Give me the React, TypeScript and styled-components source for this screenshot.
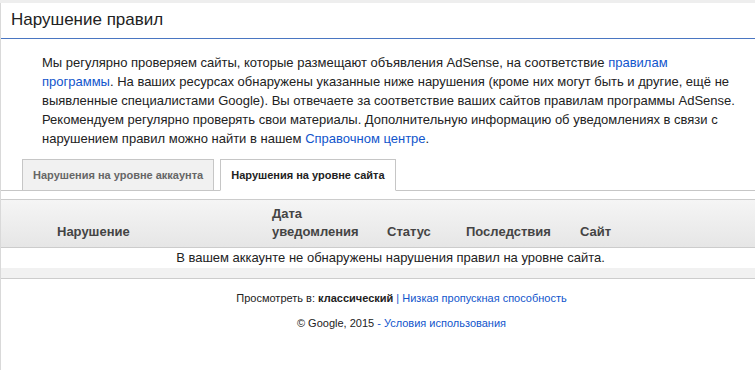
import React from "react";
import styled, { createGlobalStyle } from "styled-components";

const GlobalStyle = createGlobalStyle`
  html, body {
    margin: 0;
    padding: 0;
    background: #eeeeee;
    overflow: hidden;
  }
  body {
    font-family: "Liberation Sans", Arial, sans-serif;
    color: #222;
  }
`;

const Page = styled.div`
  padding-top: 3px;
  width: 802px;
`;

const Panel = styled.div`
  background: #fff;
  border-left: 1px solid #d9d9d9;
  min-height: 367px;
`;

const Title = styled.h1`
  margin: 0;
  padding: 5px 10px 0;
  height: 30px;
  font-size: 17px;
  font-weight: normal;
  line-height: 24px;
  color: #222;
  border-bottom: 1px solid #4a76c2;
`;

const Intro = styled.p`
  margin: 14px 0 0 41px;
  width: 698px;
  font-size: 13px;
  line-height: 19px;
  color: #222;
`;

const A = styled.a`
  color: #1155cc;
  text-decoration: none;
`;

const Tabs = styled.div`
  display: flex;
  gap: 6px;
  margin-top: 11px;
  padding-left: 21px;
  border-bottom: 1px solid #c6c6c6;
  height: 31px;
`;

const Tab = styled.div<{ $active?: boolean }>`
  box-sizing: border-box;
  height: 32px;
  padding: 0 10px;
  display: flex;
  align-items: center;
  font-size: 11px;
  font-weight: bold;
  color: ${(p) => (p.$active ? "#222" : "#666")};
  background: ${(p) => (p.$active ? "#fff" : "#f1f1f1")};
  border: 1px solid #c6c6c6;
  border-bottom-color: ${(p) => (p.$active ? "#fff" : "#c6c6c6")};
`;

const Table = styled.div`
  margin-top: 8px;
  border-bottom: 1px solid #cccccc;
`;

const HeadRow = styled.div`
  display: grid;
  grid-template-columns: 271px 115px 79px 114px 1fr;
  align-items: end;
  height: 49px;
  box-sizing: border-box;
  padding-bottom: 6px;
  border-top: 1px solid #cccccc;
  border-bottom: 1px solid #cccccc;
  background: linear-gradient(#f5f5f5, #e6e6e6);
`;

const HeadCell = styled.div<{ $pad?: number }>`
  padding-left: ${(p) => p.$pad ?? 0}px;
  font-size: 13px;
  font-weight: bold;
  line-height: 18px;
  color: #444;
`;

const EmptyRow = styled.div`
  height: 20px;
  line-height: 20px;
  text-align: center;
  padding-right: 22px;
  font-size: 13px;
  color: #222;
`;

const Strip = styled.div`
  height: 10px;
  background: #f1f1f1;
`;

const Footer = styled.div`
  text-align: center;
  font-size: 11px;
  color: #222;
  padding-top: 12px;
`;

const FooterLine = styled.div`
  line-height: 14px;
  & + & {
    margin-top: 11px;
  }
`;

const Sep = styled.span`
  color: #1155cc;
`;

export default function App() {
  return (
    <Page>
      <GlobalStyle />
      <Panel>
        <Title>Нарушение правил</Title>
        <Intro>
          Мы регулярно проверяем сайты, которые размещают объявления AdSense, на соответствие{" "}
          <A href="#">правилам программы</A>. На ваших ресурсах обнаружены указанные ниже нарушения (кроме
          них могут быть и другие, ещё не выявленные специалистами Google). Вы отвечаете за соответствие ваших
          сайтов правилам программы AdSense. Рекомендуем регулярно проверять свои материалы. Дополнительную
          информацию об уведомлениях в связи с нарушением правил можно найти в нашем{" "}
          <A href="#">Справочном центре</A>.
        </Intro>
        <Tabs>
          <Tab>Нарушения на уровне аккаунта</Tab>
          <Tab $active>Нарушения на уровне сайта</Tab>
        </Tabs>
        <Table>
          <HeadRow>
            <HeadCell $pad={56}>Нарушение</HeadCell>
            <HeadCell>
              Дата
              <br />
              уведомления
            </HeadCell>
            <HeadCell>Статус</HeadCell>
            <HeadCell>Последствия</HeadCell>
            <HeadCell>Сайт</HeadCell>
          </HeadRow>
          <EmptyRow>В вашем аккаунте не обнаружены нарушения правил на уровне сайта.</EmptyRow>
          <Strip />
        </Table>
        <Footer>
          <FooterLine>
            Просмотреть в: <b>классический</b> <Sep>|</Sep> <A href="#">Низкая пропускная способность</A>
          </FooterLine>
          <FooterLine>
            © Google, 2015 <Sep>-</Sep> <A href="#">Условия использования</A>
          </FooterLine>
        </Footer>
      </Panel>
    </Page>
  );
}
